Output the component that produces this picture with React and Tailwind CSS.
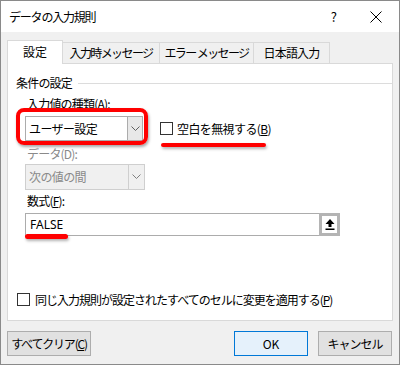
import React from "react";

const font = { fontFamily: '"Noto Sans CJK JP", "Noto Sans", sans-serif' };

function Check() {
  return <div className="w-[13px] h-[13px] border border-[#333] bg-white shrink-0" />;
}

function Chevron({ color = "#606060" }) {
  return (
    <svg width="9" height="6" viewBox="0 0 9 6">
      <path d="M0.5 0.5 L4.5 4.5 L8.5 0.5" fill="none" stroke={color} strokeWidth="1" />
    </svg>
  );
}

export default function App() {
  return (
    <div className="w-[400px] h-[365px] border border-[#8a8a8a] bg-[#f0f0f0] flex flex-col text-[12px] text-black leading-none whitespace-nowrap" style={font}>
      {/* title bar */}
      <div className="h-[31px] bg-white flex items-center shrink-0">
        <span className="pl-[8px] text-[12px] tracking-[-1.2px]">データの入力規則</span>
        <span className="ml-auto text-[13px] mr-[33px]">?</span>
        <svg width="12" height="12" viewBox="0 0 12 12" className="mr-[17px]">
          <path d="M0.5 0.5 L11.5 11.5 M11.5 0.5 L0.5 11.5" stroke="#000" strokeWidth="1" />
        </svg>
      </div>

      {/* body */}
      <div className="flex-1 flex flex-col px-[6px]">
        {/* tabs */}
        <div className="flex items-end h-[31px] relative z-10 shrink-0">
          <div className="w-[56px] h-[24px] bg-white border border-[#d9d9d9] border-b-0 flex items-center justify-center text-[12px] -mb-px pb-[2px]">設定</div>
          <div className="w-[97px] h-[21px] border border-[#d9d9d9] border-l-0 border-b-0 flex items-center justify-center text-[12px] tracking-[-1.6px]">入力時メッセージ</div>
          <div className="w-[94px] h-[21px] border border-[#d9d9d9] border-l-0 border-b-0 flex items-center justify-center text-[12px] tracking-[-1.6px]">エラー メッセージ</div>
          <div className="w-[76px] h-[21px] border border-[#d9d9d9] border-l-0 border-b-0 flex items-center justify-center text-[12px] tracking-[-0.8px]">日本語入力</div>
        </div>

        {/* panel */}
        <div className="h-[258px] shrink-0 bg-white border border-[#d9d9d9] flex flex-col pl-[8px] pr-[8px]">
          <div className="flex items-center mt-[13px] shrink-0">
            <span className="text-[12px] tracking-[-0.8px]">条件の設定</span>
            <div className="flex-1 h-px bg-[#dcdcdc] ml-[6px] -mr-[8px]" />
          </div>
          <div className="pl-[11px] mt-[9px] text-[12px] tracking-[-0.8px] shrink-0">入力値の種類(<span className="underline">A</span>):</div>

          <div className="flex items-center mt-[6px] relative shrink-0">
            <div className="ml-[9px] w-[118px] h-[25px] border border-[#acacac] bg-white flex items-center">
              <span className="pl-[3px] text-[12px] tracking-[-0.6px] flex-1">ユーザー設定</span>
              <div className="w-[15px] h-full border-l border-[#acacac] bg-[#e8e8e8] flex items-center justify-center"><Chevron /></div>
            </div>
            <div className="absolute left-0 top-[-8px] w-[132px] h-[37px] border-[4px] border-[#ff0000] rounded-[8px] shadow-[1px_2px_3px_rgba(0,0,0,0.35)]" />
            <div className="ml-[17px] flex items-center">
              <Check />
              <span className="ml-[4px] text-[12px] tracking-[-0.6px]">空白を無視する(<span className="underline">B</span>)</span>
            </div>
            <div className="absolute left-[145px] top-[27px] w-[105px] h-[4px] bg-[#ff0000] rounded-full shadow-[1px_2px_3px_rgba(0,0,0,0.3)]" />
          </div>

          <div className="pl-[11px] mt-[7px] text-[12px] tracking-[-0.8px] text-[#8a8a8a] shrink-0">データ(D):</div>
          <div className="ml-[9px] mt-[4px] w-[120px] h-[26px] shrink-0 border border-[#cfcfcf] bg-[#f0f0f0] flex items-center">
            <span className="pl-[3px] text-[12px] tracking-[-0.6px] flex-1 text-[#8a8a8a]">次の値の間</span>
            <div className="w-[16px] h-full border-l border-[#cfcfcf] bg-[#f0f0f0] flex items-center justify-center"><Chevron color="#808080" /></div>
          </div>

          <div className="pl-[11px] mt-[5px] text-[12px] tracking-[-0.8px] shrink-0">数式(<span className="underline">F</span>):</div>
          <div className="ml-[9px] mt-[6px] flex relative shrink-0">
            <div className="w-[294px] h-[23px] border border-[#acacac] border-r-0 flex items-center">
              <span className="pl-[4px] text-[12px]" style={{ fontFamily: '"Noto Sans", sans-serif' }}>FALSE</span>
            </div>
            <div className="w-[21px] h-[23px] border-[3px] border-[#b4b4b4] bg-white flex items-center justify-center">
              <svg width="10" height="11" viewBox="0 0 10 11">
                <path d="M5 0 L9.5 5 L6.5 5 L6.5 8 L3.5 8 L3.5 5 L0.5 5 Z" fill="#000" />
                <rect x="0.5" y="9.5" width="9" height="1.5" fill="#000" />
              </svg>
            </div>
            <div className="absolute left-0 top-[21px] w-[43px] h-[5px] bg-[#ff0000] rounded-full shadow-[1px_2px_3px_rgba(0,0,0,0.3)]" />
          </div>

          <div className="flex items-center mt-[57px] pl-[1px] shrink-0">
            <Check />
            <span className="ml-[5px] text-[12px] tracking-[-1px]">同じ入力規則が設定されたすべてのセルに変更を適用する(<span className="underline">P</span>)</span>
          </div>
        </div>

        {/* buttons */}
        <div className="flex items-center mt-[10px] shrink-0">
          <div className="w-[84px] h-[25px] border border-[#adadad] bg-[#e1e1e1] flex items-center justify-center text-[12px] tracking-[-1.2px]">すべてクリア(<span className="underline">C</span>)</div>
          <div className="ml-auto w-[74px] h-[25px] border border-[#0078d7] bg-[#e5f1fb] flex items-center justify-center text-[12px]">OK</div>
          <div className="ml-[10px] w-[74px] h-[25px] border border-[#adadad] bg-[#e1e1e1] flex items-center justify-center text-[12px] tracking-[-1px] mr-[1px]">キャンセル</div>
        </div>
      </div>
    </div>
  );
}
